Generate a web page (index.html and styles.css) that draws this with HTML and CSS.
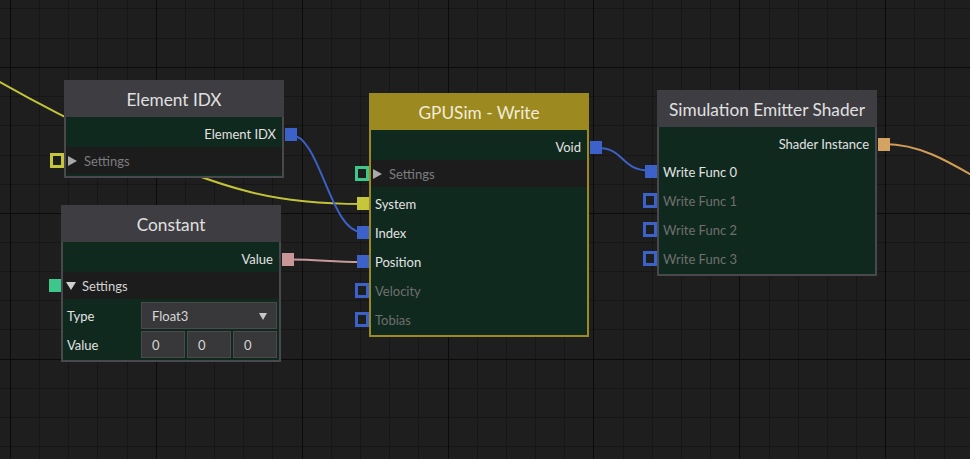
FILE: index.html
```html
<!DOCTYPE html>
<html>
<head>
<meta charset="utf-8">
<link rel="stylesheet" href="styles.css">
</head>
<body>
<div class="canvas">
  <svg class="layer" width="970" height="459" shape-rendering="crispEdges">
    <path class="minor" d="M39.5 0V459M68.5 0V459M97.5 0V459M127.5 0V459M185.5 0V459M214.5 0V459M243.5 0V459M272.5 0V459M331.5 0V459M360.5 0V459M389.5 0V459M418.5 0V459M477.5 0V459M506.5 0V459M535.5 0V459M564.5 0V459M623.5 0V459M652.5 0V459M681.5 0V459M710.5 0V459M769.5 0V459M798.5 0V459M827.5 0V459M856.5 0V459M914.5 0V459M944.5 0V459M0 8.5H970M0 38.5H970M0 96.5H970M0 125.5H970M0 155.5H970M0 184.5H970M0 242.5H970M0 271.5H970M0 300.5H970M0 329.5H970M0 388.5H970M0 417.5H970M0 446.5H970"/>
    <path class="major" d="M10.5 0V459M156.5 0V459M302.5 0V459M448.5 0V459M593.5 0V459M739.5 0V459M885.5 0V459M0 67.5H970M0 213.5H970M0 359.5H970"/>
  </svg>
  <svg class="layer" width="970" height="459">
    <path class="wire w-yellow" d="M-20 70.6L0 82C60 116 170 172 250 192C280 199.5 320 204 362 204"/>
    <path class="wire w-blue" d="M291 135C320 135 330 232 362 232"/>
    <path class="wire w-pink" d="M290 259.5C320 259.5 330 262 362 262"/>
    <path class="wire w-blue" d="M598 148C625 148 620 170.5 650 170.5"/>
    <path class="wire w-orange" d="M884 144C918 144 945 159 985 183"/>
  </svg>

  <div class="node gray n-elem">
    <div class="head">Element IDX</div>
    <div class="outs"><div class="row out">Element IDX<i class="pin fill blue"></i></div></div>
    <div class="settings"><i class="tri closed"></i><span class="dim">Settings</span><i class="pin ring yellow"></i></div>
  </div>

  <div class="node gray n-const">
    <div class="head">Constant</div>
    <div class="outs"><div class="row out">Value<i class="pin fill pink"></i></div></div>
    <div class="settings"><i class="tri open"></i><span>Settings</span><i class="pin fill green"></i></div>
    <div class="props">
      <div class="prop">
        <span class="plabel">Type</span>
        <div class="box select">Float3<i class="caret"></i></div>
      </div>
      <div class="prop">
        <span class="plabel">Value</span>
        <div class="triple">
          <div class="box">0</div>
          <div class="box">0</div>
          <div class="box">0</div>
        </div>
      </div>
    </div>
  </div>

  <div class="node gold n-gpu">
    <div class="head">GPUSim - Write</div>
    <div class="outs"><div class="row out">Void<i class="pin fill blue"></i></div></div>
    <div class="settings"><i class="tri closed"></i><span class="dim">Settings</span><i class="pin ring green"></i></div>
    <div class="ins">
      <div class="row in">System<i class="pin fill yellow"></i></div>
      <div class="row in">Index<i class="pin fill blue"></i></div>
      <div class="row in">Position<i class="pin fill blue"></i></div>
      <div class="row in off">Velocity<i class="pin ring blue"></i></div>
      <div class="row in off">Tobias<i class="pin ring blue"></i></div>
    </div>
  </div>

  <div class="node gray n-sim">
    <div class="head">Simulation Emitter Shader</div>
    <div class="outs"><div class="row out">Shader Instance<i class="pin fill orange"></i></div></div>
    <div class="ins">
      <div class="row in">Write Func 0<i class="pin fill blue"></i></div>
      <div class="row in off">Write Func 1<i class="pin ring blue"></i></div>
      <div class="row in off">Write Func 2<i class="pin ring blue"></i></div>
      <div class="row in off">Write Func 3<i class="pin ring blue"></i></div>
    </div>
  </div>
</div>
</body>
</html>
```

FILE: styles.css
```css
* { box-sizing: border-box; }
html, body { margin: 0; padding: 0; background: #1e1e1e; }
body { width: 970px; height: 459px; overflow: hidden; font-family: Lato, "Open Sans", sans-serif; }

.canvas { position: relative; width: 970px; height: 459px; background: #1e1e1e; overflow: hidden; }
.layer { position: absolute; left: 0; top: 0; }
.minor { stroke: #161616; stroke-width: 1; fill: none; }
.major { stroke: #0b0b0b; stroke-width: 1; fill: none; }

.wire { fill: none; stroke-width: 2; }
.w-yellow { stroke: #c3c33a; }
.w-blue { stroke: #3b60c6; }
.w-pink { stroke: #c99a9a; }
.w-orange { stroke: #d19d58; }

.node {
  position: absolute;
  width: 220px;
  border: 2px solid #48484d;
  background: #10291e;
  display: flex;
  flex-direction: column;
}
.node.gold { border-color: #9c891f; }
.n-elem { left: 64px; top: 80px; }
.n-const { left: 61px; top: 205px; }
.n-gpu { left: 369px; top: 93px; }
.n-sim { left: 657px; top: 90px; }

.head {
  background: #3d3d42;
  color: #e0e0e0;
  font-size: 17.25px;
  display: flex;
  align-items: center;
  justify-content: center;
  margin: -2px -2px 0;
  padding-top: 2px;
  height: 37px;
}
.gold .head { background: #9c891f; color: #f1ecd8; }

.outs { height: 30px; padding-top: 4px; }
.row {
  position: relative;
  font-size: 13px;
  color: #e2e2e2;
  display: flex;
  align-items: center;
}
.row.out { height: 26px; justify-content: flex-end; padding-right: 6px; }
.row.in { height: 29px; padding-left: 4px; }
.row.off { color: #6f6f6f; }

.settings {
  position: relative;
  height: 27px;
  background: #1c1c1d;
  display: flex;
  align-items: center;
  padding-left: 2px;
  font-size: 13px;
  color: #d2d2d2;
}
.settings .dim { color: #7d7d7d; }
.settings + .ins { padding-top: 2px; }
.n-elem .settings { margin-bottom: 2px; }
.ins { padding-bottom: 1px; }

.tri { display: block; width: 0; height: 0; }
.tri.closed {
  border-left: 9px solid #a9a9a9;
  border-top: 5px solid transparent;
  border-bottom: 5px solid transparent;
  margin: 0 7px 0 0;
}
.tri.open {
  border-top: 8px solid #cfcfcf;
  border-left: 5px solid transparent;
  border-right: 5px solid transparent;
  margin: 0 6px 0 1px;
}

.pin { position: absolute; display: block; }
.pin.fill { width: 12px; height: 13px; }
.pin.ring { width: 14px; height: 15px; border: 3px solid; background: #1b1f1e; }
.row.out .pin { right: -15px; top: 7px; }
.row.in .pin.fill { left: -14px; top: 8px; }
.row.in .pin.ring { left: -16px; top: 7px; }
.settings .pin.ring { left: -16px; top: 6px; }
.settings .pin.fill { left: -14px; top: 7px; }

.fill.blue { background: #3c62c9; }
.fill.yellow { background: #c6c63b; }
.fill.pink { background: #c99797; }
.fill.orange { background: #d4a261; }
.fill.green { background: #3ec78b; }
.ring.blue { border-color: #3c62c9; }
.ring.yellow { border-color: #c6c63b; }
.ring.green { border-color: #3ec78b; }

.props { padding: 2px 2px 1px 4px; }
.prop { height: 29px; display: flex; align-items: center; font-size: 13px; color: #e2e2e2; }
.plabel { width: 74px; flex: none; }
.box {
  height: 27px;
  background: #38383a;
  border: 1px solid #4a4a4c;
  color: #d6d6d6;
  font-size: 13px;
  display: flex;
  align-items: center;
  padding-left: 10px;
}
.select { flex: 1; position: relative; }
.caret {
  position: absolute;
  right: 9px;
  top: 10px;
  width: 0; height: 0;
  border-top: 7px solid #c8c8c8;
  border-left: 4px solid transparent;
  border-right: 4px solid transparent;
}
.triple { flex: 1; display: flex; gap: 2px; }
.triple .box { flex: 1; }
```
